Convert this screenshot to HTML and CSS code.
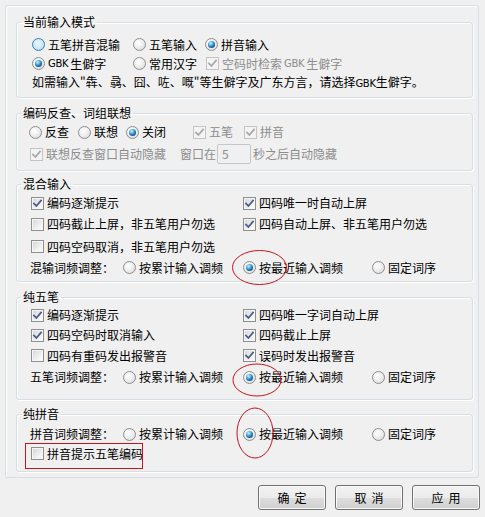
FILE: index.html
```html
<!DOCTYPE html>
<html lang="zh-CN">
<head>
<meta charset="utf-8">
<title>输入设置</title>
<link rel="stylesheet" href="styles.css">
</head>
<body>
<div class="page">
  <div class="panel">
    <fieldset class="grp g1">
      <legend>当前输入模式</legend>
      <div class="row h19 p15">
        <label class="item w101"><span class="rd hover"></span>五笔拼音混输</label>
        <label class="item w72"><span class="rd"></span>五笔输入</label>
        <label class="item"><span class="rd on"></span>拼音输入</label>
      </div>
      <div class="row h19 p15">
        <label class="item w101"><span class="rd on"></span><span class="en">GBK</span>生僻字</label>
        <label class="item w73"><span class="rd"></span>常用汉字</label>
        <label class="item dis"><span class="cb off-dis"><svg class="tick" viewBox="0 0 11 11"><path d="M2 5.6 L4.4 8 L9 2.6"/></svg></span>空码时检索<span class="en">GBK</span>生僻字</label>
      </div>
      <div class="row h19 p15">
        <span class="note">如需输入"犇、骉、囧、咗、嘅"等生僻字及广东方言，请选择<span class="en">GBK</span>生僻字。</span>
      </div>
    </fieldset>

    <fieldset class="grp g2">
      <legend>编码反查、词组联想</legend>
      <div class="row h20 p12">
        <label class="item w49"><span class="rd"></span>反查</label>
        <label class="item w48"><span class="rd"></span>联想</label>
        <label class="item w67"><span class="rd on"></span>关闭</label>
        <label class="item w51 dis"><span class="cb off-dis"><svg class="tick" viewBox="0 0 11 11"><path d="M2 5.6 L4.4 8 L9 2.6"/></svg></span>五笔</label>
        <label class="item dis"><span class="cb off-dis"><svg class="tick" viewBox="0 0 11 11"><path d="M2 5.6 L4.4 8 L9 2.6"/></svg></span>拼音</label>
      </div>
      <div class="row h24 p13">
        <label class="item w150 dis"><span class="cb off-dis"><svg class="tick" viewBox="0 0 11 11"><path d="M2 5.6 L4.4 8 L9 2.6"/></svg></span>联想反查窗口自动隐藏</label>
        <span class="dis w37">窗口在</span>
        <span class="num">5</span>
        <span class="dis after">秒之后自动隐藏</span>
      </div>
    </fieldset>

    <fieldset class="grp g3">
      <legend>混合输入</legend>
      <div class="row h20 p14">
        <label class="item w212"><span class="cb"><svg class="tick" viewBox="0 0 11 11"><path d="M2 5.6 L4.4 8 L9 2.6"/></svg></span>编码逐渐提示</label>
        <label class="item"><span class="cb"><svg class="tick" viewBox="0 0 11 11"><path d="M2 5.6 L4.4 8 L9 2.6"/></svg></span>四码唯一时自动上屏</label>
      </div>
      <div class="row h22 p14">
        <label class="item w212"><span class="cb"></span>四码截止上屏，非五笔用户勿选</label>
        <label class="item"><span class="cb"><svg class="tick" viewBox="0 0 11 11"><path d="M2 5.6 L4.4 8 L9 2.6"/></svg></span>四码自动上屏、非五笔用户勿选</label>
      </div>
      <div class="row h23 p14">
        <label class="item w212"><span class="cb"></span>四码空码取消，非五笔用户勿选</label>
      </div>
      <div class="row h19 p13">
        <span class="w93">混输词频调整：</span>
        <label class="item w120"><span class="rd"></span>按累计输入调频</label>
        <label class="item w129"><span class="rd on"></span>按最近输入调频</label>
        <label class="item"><span class="rd"></span>固定词序</label>
      </div>
    </fieldset>

    <fieldset class="grp g4">
      <legend>纯五笔</legend>
      <div class="row h20 p14">
        <label class="item w212"><span class="cb"><svg class="tick" viewBox="0 0 11 11"><path d="M2 5.6 L4.4 8 L9 2.6"/></svg></span>编码逐渐提示</label>
        <label class="item"><span class="cb"><svg class="tick" viewBox="0 0 11 11"><path d="M2 5.6 L4.4 8 L9 2.6"/></svg></span>四码唯一字词自动上屏</label>
      </div>
      <div class="row h20 p14">
        <label class="item w212"><span class="cb"><svg class="tick" viewBox="0 0 11 11"><path d="M2 5.6 L4.4 8 L9 2.6"/></svg></span>四码空码时取消输入</label>
        <label class="item"><span class="cb"><svg class="tick" viewBox="0 0 11 11"><path d="M2 5.6 L4.4 8 L9 2.6"/></svg></span>四码截止上屏</label>
      </div>
      <div class="row h21 p14">
        <label class="item w212"><span class="cb"></span>四码有重码发出报警音</label>
        <label class="item"><span class="cb"><svg class="tick" viewBox="0 0 11 11"><path d="M2 5.6 L4.4 8 L9 2.6"/></svg></span>误码时发出报警音</label>
      </div>
      <div class="row h22 p13">
        <span class="w93">五笔词频调整：</span>
        <label class="item w120"><span class="rd"></span>按累计输入调频</label>
        <label class="item w129"><span class="rd on"></span>按最近输入调频</label>
        <label class="item"><span class="rd"></span>固定词序</label>
      </div>
    </fieldset>

    <fieldset class="grp g5">
      <legend>纯拼音</legend>
      <div class="row h20 p13">
        <span class="w93">拼音词频调整：</span>
        <label class="item w120"><span class="rd"></span>按累计输入调频</label>
        <label class="item w129"><span class="rd on"></span>按最近输入调频</label>
        <label class="item"><span class="rd"></span>固定词序</label>
      </div>
      <div class="row h19 p14">
        <label class="item"><span class="cb"></span>拼音提示五笔编码</label>
      </div>
    </fieldset>
  </div>

  <div class="buttons">
    <button class="btn">确定</button>
    <button class="btn">取消</button>
    <button class="btn">应用</button>
  </div>

  <svg class="marks" width="485" height="517" viewBox="0 0 485 517">
    <ellipse cx="259.5" cy="267.5" rx="27" ry="17"/>
    <ellipse cx="257" cy="380" rx="24" ry="16"/>
    <ellipse cx="255" cy="433" rx="18" ry="25"/>
    <rect x="25.5" y="443.5" width="117" height="25"/>
  </svg>
</div>
</body>
</html>
```

FILE: styles.css
```css
html, body {
  margin: 0;
  padding: 0;
}
body {
  background: #f0f0f0;
  font-family: "Noto Sans CJK SC", "Noto Sans", sans-serif;
  font-size: 12px;
  line-height: 16px;
  color: #000;
}
.page {
  position: relative;
  width: 485px;
  height: 517px;
  overflow: hidden;
}
.panel {
  margin: 5px 6px 0 5px;
  border: 1px solid #d5dfe5;
  box-shadow: inset 1px 1px 0 #fff;
  border-radius: 2px;
  padding: 8px 5px 5px 10px;
}
.grp {
  margin: 0;
  border: 1px solid #d5dfe5;
  border-radius: 3px;
  box-shadow: inset 1px 1px 0 #fff, 1px 1px 0 #fff;
  padding: 0;
  min-width: 0;
}
.grp legend {
  margin-left: 4px;
  padding: 0 2px;
  height: 16px;
  line-height: 16px;
}
.g1 { padding: 5px 0 5px 0; }
.g2 { margin-top: 7px; padding: 1px 0 4px 0; }
.g3 { margin-top: 5px; padding: 1px 0 4px 0; }
.g4 { margin-top: 7px; padding: 0 0 11px 0; }
.g5 { margin-top: 6px; padding: 2px 0 8px 0; }

.row {
  display: flex;
  align-items: center;
  white-space: nowrap;
}
.h19 { height: 19px; }
.h20 { height: 20px; }
.h21 { height: 21px; }
.h22 { height: 22px; }
.h23 { height: 23px; }
.h24 { height: 24px; }
.p12 { padding-left: 12px; }
.p13 { padding-left: 13px; }
.p14 { padding-left: 14px; }
.p15 { padding-left: 15px; }

.item {
  display: flex;
  align-items: center;
  gap: 2px;
  flex: none;
}
.w37 { width: 37px; flex: none; }
.w48 { width: 48px; }
.w49 { width: 49px; }
.w51 { width: 51px; }
.w67 { width: 67px; }
.w72 { width: 72px; }
.w73 { width: 73px; }
.w93 { width: 93px; flex: none; }
.w101 { width: 101px; }
.w120 { width: 120px; }
.w129 { width: 129px; }
.w150 { width: 150px; }
.w212 { width: 212px; }

.dis { color: #8d8d8d; }
.en {
  font-family: "DejaVu Sans", sans-serif;
  font-size: 10px;
  letter-spacing: -0.3px;
}
.note { padding-left: 0; }

/* radio button */
.rd {
  box-sizing: border-box;
  width: 13px;
  height: 13px;
  border-radius: 50%;
  border: 1px solid #8e8f8f;
  background: radial-gradient(circle at 40% 35%, #ffffff 0%, #f1f1f1 40%, #d4d4d4 100%);
  display: flex;
  align-items: center;
  justify-content: center;
  flex: none;
  margin-right: 1px;
}
.rd.hover {
  border-color: #3c7fb1;
  background: radial-gradient(circle at 45% 40%, #eef8fe 0%, #cbe9fa 55%, #9fd3f1 100%);
}
.rd.on::after {
  content: "";
  width: 7px;
  height: 7px;
  border-radius: 50%;
  background: radial-gradient(circle at 38% 32%, #d8f4ff 0%, #5cb7e8 30%, #1c6aa6 62%, #0b2f58 100%);
}

/* checkbox */
.cb {
  box-sizing: border-box;
  width: 13px;
  height: 13px;
  border: 1px solid #8e8f8f;
  background: linear-gradient(135deg, #d4d4d4 0%, #f0f0f0 60%, #ffffff 100%);
  box-shadow: inset 0 0 0 1px #f6f6f6;
  display: flex;
  align-items: center;
  justify-content: center;
  flex: none;
  margin-right: 1px;
}
.cb.off-dis {
  border-color: #c4c4c4;
  background: #f4f4f4;
  box-shadow: none;
}
.tick {
  width: 11px;
  height: 11px;
  display: block;
}
.tick path {
  fill: none;
  stroke: #4a5e8c;
  stroke-width: 1.8;
  stroke-linecap: square;
}
.off-dis .tick path {
  stroke: #a9a9a9;
}

/* number box */
.num {
  box-sizing: border-box;
  width: 34px;
  height: 20px;
  border: 1px solid #c6c6c6;
  border-radius: 2px;
  background: #f0f0f0;
  color: #8d8d8d;
  padding-left: 4px;
  line-height: 18px;
  flex: none;
}
.after { padding-left: 2px; }

/* buttons */
.buttons {
  display: flex;
  justify-content: flex-end;
  gap: 9px;
  margin: 7px 5px 0 0;
}
.btn {
  box-sizing: border-box;
  width: 68px;
  height: 25px;
  border: 1px solid #707070;
  border-radius: 3px;
  background: linear-gradient(#f2f2f2 0%, #ebebeb 50%, #dddddd 51%, #cfcfcf 100%);
  box-shadow: inset 0 0 0 1px #fbfbfb;
  font-family: "Noto Sans CJK SC", sans-serif;
  font-size: 12px;
  color: #000;
  letter-spacing: 5px;
  text-indent: 5px;
  padding: 0;
  line-height: 16px;
}

/* red annotation marks drawn over the dialog */
.marks {
  position: absolute;
  left: 0;
  top: 0;
  pointer-events: none;
}
.marks ellipse,
.marks rect {
  fill: none;
  stroke: #c8141e;
  stroke-width: 1;
}
```
